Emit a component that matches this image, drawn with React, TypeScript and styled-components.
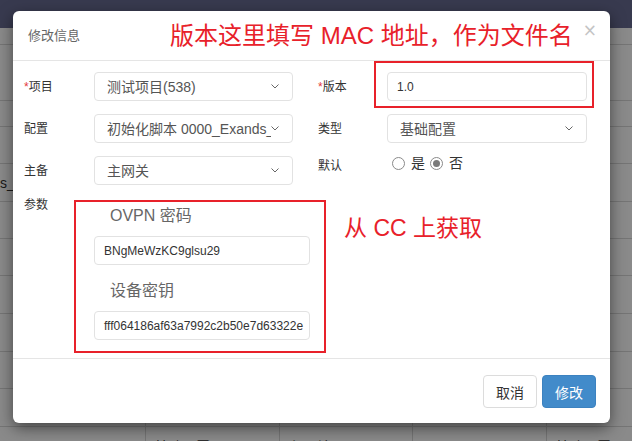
import React from "react";
import styled, { createGlobalStyle } from "styled-components";

const Global = createGlobalStyle`
  html, body { margin: 0; padding: 0; }
  body {
    width: 632px; height: 441px; overflow: hidden; background: #fff;
    font-family: "Liberation Sans", "Noto Sans CJK SC", sans-serif;
  }
  * { box-sizing: border-box; }
`;

const Page = styled.div`
  position: relative;
  width: 632px;
  height: 441px;
  overflow: hidden;
  background: #fff;
`;

const NavBar = styled.div`
  height: 28px;
  background: #686b92;
`;

const TableRow = styled.div<{ $h: number }>`
  height: ${(p) => p.$h}px;
  border-bottom: 1px solid #d8d8d8;
  display: grid;
  grid-template-columns: 145px 134px 133px 134px 86px;
  font-size: 14px;
  color: #333;
`;

const Cell = styled.div<{ $first?: boolean }>`
  border-left: ${(p) => (p.$first ? "none" : "1px solid #d8d8d8")};
  padding: 9px 8px;
  line-height: 20px;
  white-space: nowrap;
  overflow: hidden;
  display: flex;
  align-items: center;
  align-self: stretch;
`;

const EdgeCell = styled(Cell)`
  padding: 0;
  gap: 2px;
`;

const OrangeMark = styled.span`
  display: inline-block;
  width: 2px;
  height: 15px;
  background: #f29b2e;
`;

const Overlay = styled.div`
  position: absolute;
  inset: 0;
  background: rgba(0, 0, 0, 0.46);
`;

const Modal = styled.div`
  position: absolute;
  left: 13px;
  top: 11px;
  width: 597px;
  background: #fff;
  border-radius: 6px;
  box-shadow: 0 5px 15px rgba(0, 0, 0, 0.5);
  display: flex;
  flex-direction: column;
`;

const Header = styled.div`
  height: 50px;
  padding: 0 13px 0 15px;
  display: flex;
  align-items: center;
  border-bottom: 1px solid #e5e5e5;
`;

const Title = styled.div`
  font-size: 13px;
  line-height: 20px;
  color: #666;
`;

const Close = styled.button`
  margin-left: auto;
  align-self: flex-start;
  margin-top: 11px;
  border: none;
  background: transparent;
  padding: 0;
  font-family: "DejaVu Sans", sans-serif;
  font-size: 17px;
  font-weight: normal;
  line-height: 1;
  color: #c4c4c4;
`;

const Body = styled.div`
  padding: 11px 23px 18px 11px;
  display: grid;
  grid-template-columns: 269px 269px;
  column-gap: 25px;
  row-gap: 13px;
`;

const FormItem = styled.div<{ $label: number; $align?: string; $full?: boolean }>`
  display: grid;
  grid-template-columns: ${(p) => p.$label}px ${(p) => (p.$full ? "216px" : "minmax(0, 1fr)")};
  align-items: ${(p) => p.$align || "center"};
  min-width: 0;
  ${(p) => (p.$full ? "grid-column: 1 / -1;" : "")}
`;

const Label = styled.div<{ $lh?: number }>`
  font-size: 12px;
  line-height: ${(p) => p.$lh || 20}px;
  color: #333;
`;

const Star = styled.span`
  color: #e4393c;
`;

const Select = styled.div`
  height: 29px;
  min-width: 0;
  border: 1px solid #e2e2e2;
  border-radius: 4px;
  padding: 0 13px 0 12px;
  display: flex;
  align-items: center;
  font-size: 14px;
  color: #555;
`;

const SelectText = styled.span`
  flex: 1;
  min-width: 0;
  white-space: nowrap;
  overflow: hidden;
  line-height: 20px;
`;

const Input = styled.div`
  height: 29px;
  min-width: 0;
  border: 1px solid #e2e2e2;
  border-radius: 4px;
  padding: 0 9px;
  display: flex;
  align-items: center;
  font-size: 12px;
  color: #333;
  white-space: nowrap;
  overflow: hidden;
`;

const RadioGroup = styled.div`
  display: flex;
  align-items: center;
  height: 14px;
  padding-left: 5px;
  font-size: 14px;
  color: #333;
`;

const RadioOption = styled.label`
  display: flex;
  align-items: center;
  gap: 6px;
  margin-right: 5px;
  line-height: 14px;
`;

const RadioCircle = styled.span<{ $checked?: boolean }>`
  width: 13px;
  height: 13px;
  border-radius: 50%;
  border: 1px solid #8a8a8a;
  background: #fff;
  display: flex;
  align-items: center;
  justify-content: center;
  &::after {
    content: "";
    width: 7px;
    height: 7px;
    border-radius: 50%;
    background: ${(p) => (p.$checked ? "#7a7a7a" : "transparent")};
  }
`;

const ParamBlock = styled.div`
  display: flex;
  flex-direction: column;
`;

const SubLabel = styled.div<{ $first?: boolean }>`
  font-size: 16px;
  line-height: 22px;
  color: #666;
  padding-left: 16px;
  margin-top: ${(p) => (p.$first ? 7 : 15)}px;
  margin-bottom: 9px;
`;

const Footer = styled.div`
  border-top: 1px solid #e5e5e5;
  padding: 16px 14px 15px;
  display: flex;
  justify-content: flex-end;
  gap: 5px;
`;

const Button = styled.button<{ $primary?: boolean }>`
  width: 54px;
  height: 33px;
  border-radius: 4px;
  font-family: "Liberation Sans", "Noto Sans CJK SC", sans-serif;
  font-size: 14px;
  padding: 0;
  border: 1px solid ${(p) => (p.$primary ? "#3c82c0" : "#dcdcdc")};
  background: ${(p) => (p.$primary ? "#428bca" : "#fff")};
  color: ${(p) => (p.$primary ? "#fff" : "#333")};
`;

const Annotation = styled.div<{ $size: number; $left: number; $top: number }>`
  position: absolute;
  left: ${(p) => p.$left}px;
  top: ${(p) => p.$top}px;
  font-size: ${(p) => p.$size}px;
  line-height: 24px;
  color: #e8212a;
  white-space: nowrap;
`;

const RedBox = styled.div<{ $l: number; $t: number; $w: number; $h: number }>`
  position: absolute;
  left: ${(p) => p.$l}px;
  top: ${(p) => p.$t}px;
  width: ${(p) => p.$w}px;
  height: ${(p) => p.$h}px;
  border: 2px solid #e8212a;
`;

const Chevron = () => (
  <svg width="8" height="5" viewBox="0 0 8 5" fill="none">
    <path d="M0.5 0.5 L4 4 L7.5 0.5" stroke="#666" strokeWidth="1" />
  </svg>
);

const rowHeights = [17, 56, 26, 37, 38, 37, 37, 38, 38, 37, 38];

export default function App() {
  return (
    <Page>
      <Global />
      <NavBar />
      {rowHeights.map((h, i) => (
        <TableRow key={i} $h={h}>
          {i === 4 ? (
            <EdgeCell $first>
              s_<OrangeMark />
            </EdgeCell>
          ) : (
            <Cell $first />
          )}
          <Cell />
          <Cell />
          <Cell />
          <Cell />
        </TableRow>
      ))}
      <TableRow $h={40}>
        <Cell $first />
        <Cell>基础配置</Cell>
        <Cell>主网关</Cell>
        <Cell>否</Cell>
        <Cell>基础配置</Cell>
      </TableRow>
      <Overlay />
      <Modal>
        <Header>
          <Title>修改信息</Title>
          <Close>×</Close>
        </Header>
        <Body>
          <FormItem $label={70}>
            <Label>
              <Star>*</Star>项目
            </Label>
            <Select>
              <SelectText>测试项目(538)</SelectText>
              <Chevron />
            </Select>
          </FormItem>
          <FormItem $label={69}>
            <Label>
              <Star>*</Star>版本
            </Label>
            <Input>1.0</Input>
          </FormItem>
          <FormItem $label={70}>
            <Label>配置</Label>
            <Select>
              <SelectText>初始化脚本 0000_Exands_</SelectText>
              <Chevron />
            </Select>
          </FormItem>
          <FormItem $label={69}>
            <Label>类型</Label>
            <Select>
              <SelectText>基础配置</SelectText>
              <Chevron />
            </Select>
          </FormItem>
          <FormItem $label={70}>
            <Label>主备</Label>
            <Select>
              <SelectText>主网关</SelectText>
              <Chevron />
            </Select>
          </FormItem>
          <FormItem $label={69} $align="start">
            <Label>默认</Label>
            <RadioGroup>
              <RadioOption>
                <RadioCircle />
                是
              </RadioOption>
              <RadioOption>
                <RadioCircle $checked />
                否
              </RadioOption>
            </RadioGroup>
          </FormItem>
          <FormItem $label={70} $align="start" $full>
            <Label $lh={14}>参数</Label>
            <ParamBlock>
              <SubLabel $first>OVPN 密码</SubLabel>
              <Input>BNgMeWzKC9glsu29</Input>
              <SubLabel>设备密钥</SubLabel>
              <Input>fff064186af63a7992c2b50e7d63322e</Input>
            </ParamBlock>
          </FormItem>
        </Body>
        <Footer>
          <Button>取消</Button>
          <Button $primary>修改</Button>
        </Footer>
        <Annotation $size={24} $left={157} $top={13}>
          版本这里填写 MAC 地址，作为文件名
        </Annotation>
        <Annotation $size={23} $left={331} $top={205}>
          从 CC 上获取
        </Annotation>
        <RedBox $l={361} $t={50} $w={220} $h={47} />
        <RedBox $l={61} $t={189} $w={252} $h={153} />
      </Modal>
    </Page>
  );
}
